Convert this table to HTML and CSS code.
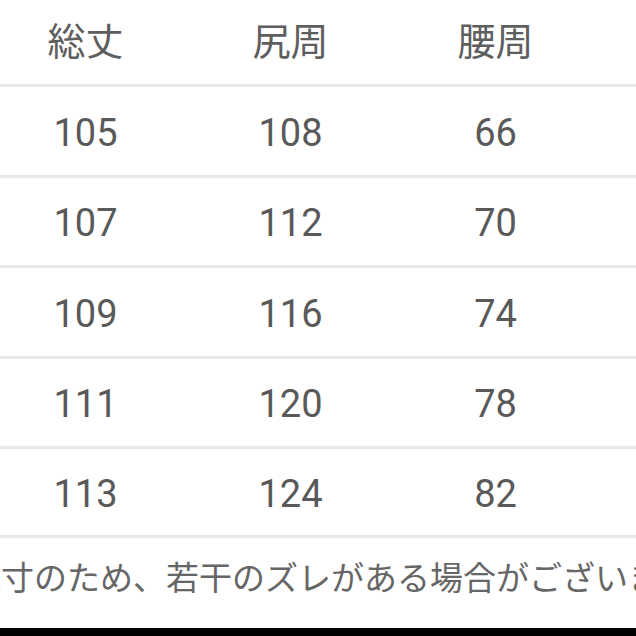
FILE: index.html
```html
<!DOCTYPE html>
<html lang="ja">
<head>
<meta charset="utf-8">
<link rel="stylesheet" href="styles.css">
</head>
<body>
<div class="page">
  <div class="table">
    <div class="row head">
      <div class="cell">総丈</div>
      <div class="cell">尻周</div>
      <div class="cell">腰周</div>
    </div>
    <div class="row num">
      <div class="cell">105</div>
      <div class="cell">108</div>
      <div class="cell">66</div>
    </div>
    <div class="row num">
      <div class="cell">107</div>
      <div class="cell">112</div>
      <div class="cell">70</div>
    </div>
    <div class="row num">
      <div class="cell">109</div>
      <div class="cell">116</div>
      <div class="cell">74</div>
    </div>
    <div class="row num">
      <div class="cell">111</div>
      <div class="cell">120</div>
      <div class="cell">78</div>
    </div>
    <div class="row num last">
      <div class="cell">113</div>
      <div class="cell">124</div>
      <div class="cell">82</div>
    </div>
  </div>
  <div class="note"><span class="note-text">採寸のため、若干のズレがある場合がございます。</span></div>
  <div class="bar"></div>
</div>
</body>
</html>
```
FILE: styles.css
```css
html, body {
  margin: 0;
  padding: 0;
  background: #ffffff;
}
.page {
  width: 636px;
  height: 636px;
  overflow: hidden;
  display: flex;
  flex-direction: column;
  font-family: Roboto, "Noto Sans CJK JP", sans-serif;
  font-weight: 400;
  color: #595959;
}
.table {
  display: flex;
  flex-direction: column;
}
.row {
  display: grid;
  grid-template-columns: repeat(3, 205px);
  margin-left: -17px;
  height: 87.5px;
  align-items: center;
  border-bottom: 3px solid #e8e8e8;
  font-size: 38px;
  line-height: 1;
}
.row.head {
  height: 84px;
  color: #5e5e5e;
}
.row.last {
  height: 86px;
}
.cell {
  text-align: center;
}
.num .cell {
  padding-top: 4px;
}
.note {
  flex: 1;
  overflow: hidden;
  white-space: nowrap;
  font-family: "Noto Sans CJK JP", sans-serif;
  font-size: 33px;
  line-height: 1;
  color: #666666;
  padding-top: 22px;
}
.note-text {
  display: block;
  margin-left: -32px;
}
.bar {
  height: 8px;
  background: #000000;
}
```
